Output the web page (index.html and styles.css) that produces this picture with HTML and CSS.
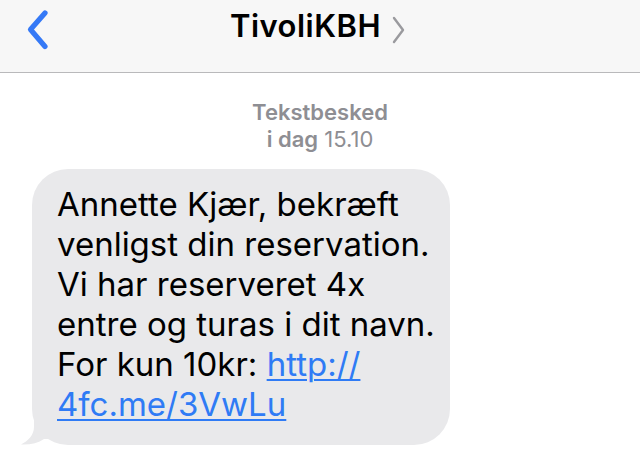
FILE: index.html
```html
<!DOCTYPE html>
<html lang="da">
<head>
<meta charset="utf-8">
<link rel="stylesheet" href="styles.css">
</head>
<body>
<header class="nav">
  <svg class="back" width="34" height="46" viewBox="0 0 34 46"><path d="M24 6 L9.5 22.5 L24 39.5" fill="none" stroke="#3579f6" stroke-width="5.2" stroke-linecap="round" stroke-linejoin="round"/></svg>
  <div class="title"><span>TivoliKBH</span><svg class="more" width="14" height="28" viewBox="0 0 14 28"><path d="M2 2 L11 14 L2 26" fill="none" stroke="#9a9a9e" stroke-width="2.4" stroke-linecap="round" stroke-linejoin="round"/></svg></div>
</header>
<main class="thread">
  <div class="stamp">
    <div class="kind">Tekstbesked</div>
    <div class="when"><b>i dag</b> 15.10</div>
  </div>
  <div class="row">
    <div class="bubble">
      <p>Annette Kjær, bekræft<br>venligst din reservation.<br>Vi har reserveret 4x<br>entre og turas i dit navn.<br>For kun 10kr: <a href="#">http://<br>4fc.me/3VwLu</a></p>
      <svg class="tail" width="32" height="28" viewBox="0 0 32 28"><path d="M14 0 L14 10 C14 18 8 24 1 27.5 C10 28 18 26 24 22 L32 22 L32 0 Z" fill="#e9e9eb"/></svg>
    </div>
  </div>
</main>
</body>
</html>
```
FILE: styles.css
```css
* { box-sizing: border-box; }
html, body { margin: 0; padding: 0; }
body {
  width: 640px;
  height: 476px;
  background: #ffffff;
  font-family: Inter, "Liberation Sans", Arial, sans-serif;
  overflow: hidden;
}
.nav {
  position: relative;
  height: 73px;
  background: #f7f7f7;
  border-bottom: 1px solid #b9b9bb;
  display: flex;
  align-items: flex-start;
  justify-content: center;
  padding-top: 7px;
}
.back {
  position: absolute;
  left: 21px;
  top: 7px;
}
.title {
  display: flex;
  align-items: flex-start;
  gap: 11px;
  margin-left: -4px;
  font-size: 31px;
  font-weight: 600;
  color: #000;
  letter-spacing: 0.5px;
}
.more { margin-top: 9px; }
.thread {
  padding-top: 26px;
}
.stamp {
  text-align: center;
  color: #8e8e93;
  font-size: 22px;
  line-height: 27px;
  font-weight: 400;
}
.kind { font-weight: 600; }
.when b { font-weight: 600; }
.row {
  padding: 16px 0 0 32px;
}
.bubble {
  position: relative;
  width: 418px;
  background: #e9e9eb;
  border-radius: 36px;
  padding: 15px 8px 21px 25px;
}
.bubble p {
  margin: 0;
  font-size: 33px;
  line-height: 40px;
  color: #000;
  white-space: nowrap;
}
.bubble a {
  color: #2f7bf5;
  text-decoration: underline;
  text-decoration-thickness: 2px;
  text-underline-offset: 3px;
}
.tail {
  position: absolute;
  left: -12px;
  bottom: 0;
}
```
